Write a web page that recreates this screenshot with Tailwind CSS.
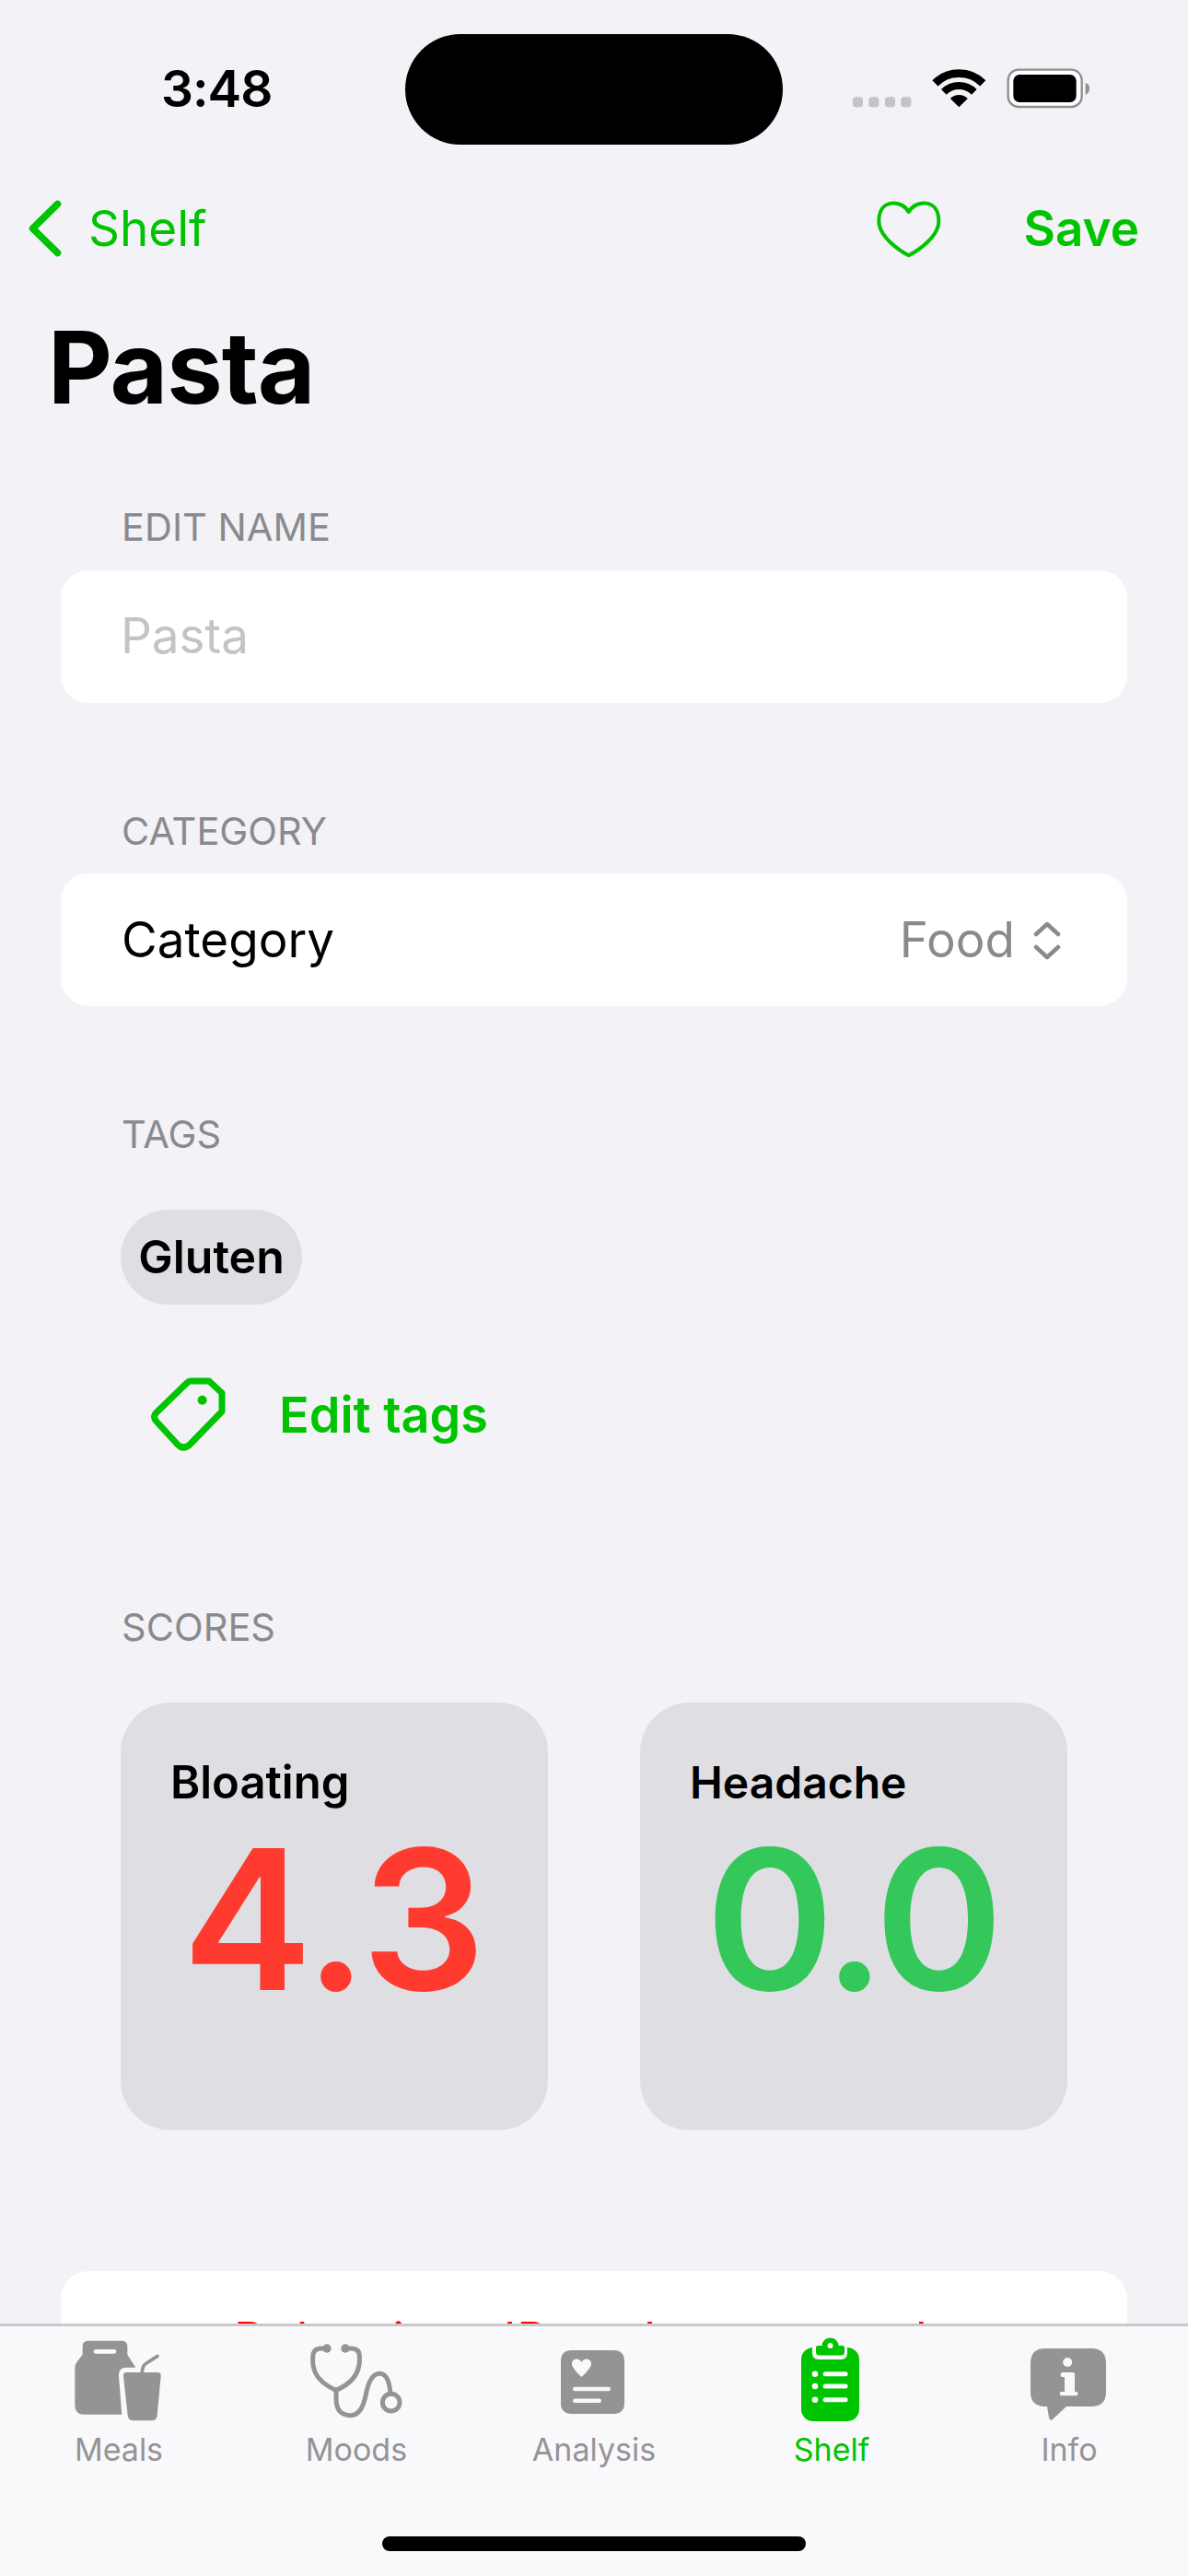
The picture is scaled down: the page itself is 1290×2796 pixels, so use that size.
<!DOCTYPE html>
<html lang="en">
  <head>
    <meta charset="UTF-8" />
    <meta name="viewport" content="width=device-width, initial-scale=1" />
    <title>Pasta</title>
    <script src="https://cdn.jsdelivr.net/npm/@tailwindcss/browser@4"></script>
  </head>

  <body class="bg-[#f2f2f7]">
    <main class="relative w-[1290px] h-[2796px] overflow-hidden bg-[#f2f2f7] text-black font-[family-name:Inter,sans-serif]">
      <!-- Status bar -->
      <div class="relative h-[192px] flex items-center justify-between pl-[175px] pr-[106px]">
        <span class="text-[55px] leading-none font-semibold tracking-[-1px]">3:48</span>
        <div class="absolute left-[440px] top-[37px] w-[410px] h-[120px] rounded-[60px] bg-black"></div>
        <svg class="mt-[11px] w-[258px] h-[60px]" viewBox="137 95 774 180" aria-hidden="true">
          <rect x="137" y="195" width="33" height="33" rx="9" fill="#c4c4c8" />
          <rect x="189" y="195" width="33" height="33" rx="9" fill="#c4c4c8" />
          <rect x="242" y="195" width="33" height="33" rx="9" fill="#c4c4c8" />
          <rect x="294" y="195" width="33" height="33" rx="9" fill="#c4c4c8" />
          <path d="M405.2 150.2A110 110 0 0 1 560.8 150.2" fill="none" stroke="#000" stroke-width="26" />
          <path d="M433.5 178.5A70 70 0 0 1 532.5 178.5" fill="none" stroke="#000" stroke-width="24" />
          <path d="M483 228L454.7 199.7A40 40 0 0 1 511.3 199.7Z" />
          <rect x="643" y="106" width="240" height="121" rx="34" fill="#fff" stroke="#8e8e93" stroke-width="7" />
          <rect x="660" y="122" width="205" height="90" rx="20" />
          <path d="M895 148Q908 152 908 167Q908 183 895 187Z" fill="#8e8e93" />
        </svg>
      </div>

      <!-- Nav row -->
      <div class="h-[112px] flex items-center justify-between pl-[31px] pr-[53px] text-[#00c400] text-[53px] leading-none">
        <div class="flex items-center gap-[29px]">
          <svg class="w-[36px] h-[62px]" viewBox="0 0 36 62" fill="none" stroke="currentColor" stroke-width="7.5" stroke-linecap="round" stroke-linejoin="round" aria-hidden="true">
            <path d="M31.5 4.500L4.500 31L31.500 57.500" />
          </svg>
          <span>Shelf</span>
        </div>
        <div class="flex items-center gap-[90px]">
          <svg class="w-[70px] h-[64px]" viewBox="218 528 210 192" fill="none" stroke="currentColor" stroke-width="12" aria-hidden="true">
            <path d="M322 570C300 530 225 525 225 600C225 650 290 695 322 712C355 695 420 650 420 600C420 525 345 530 322 570Z" stroke-linejoin="round" />
          </svg>
          <span class="font-semibold">Save</span>
        </div>
      </div>

      <h1 class="pl-[52px] pt-[34px] text-[108px] leading-[122px] font-bold tracking-[-1px]">Pasta</h1>

      <!-- Form -->
      <div class="px-[66px] pt-[88px] text-[53px]">
        <p class="pl-[66px] text-[41.5px] leading-[48px] text-[#8a8a8e]">EDIT NAME</p>
        <div class="mt-[23px] h-[144px] rounded-[30px] bg-white flex items-center pl-[65px] text-[#c4c4c7]">Pasta</div>

        <p class="mt-[115px] pl-[66px] text-[41.5px] leading-[48px] text-[#8a8a8e]">CATEGORY</p>
        <div class="mt-[22px] h-[144px] pt-[2px] rounded-[30px] bg-white flex items-center justify-between pl-[66px] pr-[72px]">
          <span>Category</span>
          <div class="flex items-center gap-[20px] text-[#8a8a8e]">
            <span>Food</span>
            <svg class="w-[30px] h-[42px]" viewBox="0 0 30 42" fill="none" stroke="currentColor" stroke-width="4.500" stroke-linecap="round" stroke-linejoin="round" aria-hidden="true">
              <path d="M3 14L15 3L27 14M3 28L15 39L27 28" />
            </svg>
          </div>
        </div>

        <p class="mt-[115px] pl-[66px] text-[41.5px] leading-[48px] text-[#8a8a8e]">TAGS</p>
        <div class="mt-[58px] ml-[65px] w-[197px] h-[103px] rounded-[52px] bg-[#dedee3] flex items-center justify-center text-[50px] font-semibold">Gluten</div>
        <div class="mt-[78px] ml-[97px] flex items-center gap-[58px] text-[#00c400] text-[54px] font-semibold">
          <svg class="w-[82px] h-[82px]" viewBox="0 0 82 82" fill="none" stroke="currentColor" stroke-width="7" stroke-linejoin="round" aria-hidden="true">
            <path d="M44 5H64L78 18V38L43 74Q36 80 30 74L7 49Q2 44 7 39L40 7Q42 5 44 5Z" />
            <circle cx="56.600" cy="25.700" r="5" fill="currentColor" stroke="none" />
          </svg>
          <span>Edit tags</span>
        </div>

        <p class="mt-[166px] pl-[66px] text-[41.5px] leading-[48px] text-[#8a8a8e]">SCORES</p>
        <div class="mt-[58px] ml-[65px] flex gap-[100px]">
          <div class="w-[464px] h-[464px] rounded-[54px] bg-[#dedee3] pt-[62px] pl-[54px]">
            <p class="text-[49px] leading-[50px] font-semibold">Bloating</p>
            <p class="mt-[17px] pl-[13px] text-[212px] leading-none font-semibold text-[#ff3b30] tracking-[-1px]">4.3</p>
          </div>
          <div class="w-[464px] h-[464px] rounded-[54px] bg-[#dedee3] pt-[62px] pl-[54px]">
            <p class="text-[48px] leading-[50px] font-semibold">Headache</p>
            <p class="mt-[17px] pl-[17px] text-[212px] leading-none font-semibold text-[#34c759] tracking-[-6px]">0.0</p>
          </div>
        </div>

        <div class="mt-[153px] h-[144px] pt-[6px] rounded-[30px] bg-white flex items-center justify-center text-[#ff0000] text-[52px]">Delete item 'Pasta' permanently</div>
      </div>

      <!-- Tab bar, sits over the scrolled content -->
      <nav class="absolute left-0 right-0 bottom-0 h-[274px] bg-[#f9f9fb] border-t-[3px] border-[#c9c9cc]">
        <div class="grid grid-cols-5 text-[34px] leading-[38px] text-[#949497] text-center">
          <div class="flex flex-col items-center pt-[14px]">
            <svg class="w-[100px] h-[90px]" viewBox="120 60 300 270" fill="currentColor" aria-hidden="true">
              <path fill-rule="evenodd" d="M170 65H280Q298 65 298 83V110L325 152H295Q268 152 270 180L280 305H157Q127 305 127 275V155Q127 142 135 132L152 110V83Q152 65 170 65ZM195 93Q188 93 188 100Q188 107 195 107H255Q262 107 262 100Q262 93 255 93Z" />
              <path d="M295 168H397Q408 168 407 180L395 308Q393 325 378 325H317Q301 325 299 308L285 180Q284 168 295 168Z" />
              <path d="M346 168Q346 146 360 138L396 115" fill="none" stroke="currentColor" stroke-width="11" stroke-linecap="round" />
            </svg>
            <span class="mt-[11px]">Meals</span>
          </div>
          <div class="flex flex-col items-center pt-[14px]">
            <svg class="ml-[4px] w-[110px] h-[90px]" viewBox="885 60 330 270" fill="none" stroke="currentColor" stroke-width="15" aria-hidden="true">
              <path d="M945 90H925Q902 92 902 120V135Q905 195 978 226Q1050 195 1054 135V115Q1054 92 1030 90H1008" />
              <path d="M978 226V258Q980 308 1025 308Q1062 308 1075 240Q1088 172 1120 172Q1150 172 1155 238" stroke-linecap="round" />
              <circle cx="948" cy="90" r="14" fill="currentColor" stroke="none" />
              <circle cx="1008" cy="90" r="14" fill="currentColor" stroke="none" />
              <circle cx="1157" cy="266" r="28" />
            </svg>
            <span class="mt-[11px]">Moods</span>
          </div>
          <div class="flex flex-col items-center pt-[14px]">
            <svg class="w-[100px] h-[90px]" viewBox="0 0 100 90" aria-hidden="true">
              <rect x="14" y="12" width="69" height="69" rx="10" fill="currentColor" />
              <path d="M36.500 41C30 35 26 30 26 26.500C26 21 34 19.500 36.500 25C39 19.500 47 21 47 26.500C47 30 43 35 36.500 41Z" fill="#f9f9fb" />
              <rect x="27" y="51.700" width="41" height="4.600" rx="2.300" fill="#f9f9fb" />
              <rect x="27" y="64.400" width="31" height="4.600" rx="2.300" fill="#f9f9fb" />
            </svg>
            <span class="mt-[11px]">Analysis</span>
          </div>
          <div class="flex flex-col items-center pt-[14px] text-[#00c400]">
            <svg class="w-[100px] h-[90px] overflow-visible" viewBox="0 0 100 90" aria-hidden="true">
              <rect x="17" y="9" width="63" height="80" rx="13" fill="currentColor" />
              <path d="M29 0V15Q29 22 36 22H60Q67 22 67 15V0Z" fill="#f9f9fb" />
              <path d="M33 9Q33 7 35 7H39.500A9 8.500 0 0 1 57.500 7H62Q64 7 64 9V14Q64 17.500 60 17.500H37Q33 17.500 33 14Z" fill="currentColor" />
              <circle cx="48.500" cy="7" r="3" fill="#f9f9fb" />
              <g fill="#f9f9fb">
                <circle cx="32" cy="37.700" r="3.300" />
                <circle cx="32" cy="51" r="3.300" />
                <circle cx="32" cy="65.700" r="3.300" />
                <rect x="40.600" y="35.200" width="27" height="5" rx="2.500" />
                <rect x="40.600" y="48.500" width="27" height="5" rx="2.500" />
                <rect x="40.600" y="63.200" width="27" height="5" rx="2.500" />
              </g>
            </svg>
            <span class="mt-[11px]">Shelf</span>
          </div>
          <div class="flex flex-col items-center pt-[14px]">
            <svg class="w-[100px] h-[90px]" viewBox="0 0 100 90" aria-hidden="true">
              <path d="M24 10H74Q90 10 90 26V57Q90 73 74 73H47L32 87Q29 89 28 85L26 73H24Q8 73 8 57V26Q8 10 24 10Z" fill="currentColor" />
              <circle cx="48.200" cy="25" r="5" fill="#f9f9fb" />
              <path d="M42.500 36H54Q56 36 56 38V57H57.500Q59.500 57 59.500 59.200Q59.500 61.300 57.500 61.300H41.700Q39.700 61.300 39.700 59.200Q39.700 57 41.700 57H45V41H42.500Q40.600 41 40.600 38.500Q40.600 36 42.500 36Z" fill="#f9f9fb" />
            </svg>
            <span class="mt-[11px]">Info</span>
          </div>
        </div>
        <div class="absolute left-[415px] bottom-[27px] w-[460px] h-[16px] rounded-[8px] bg-black"></div>
      </nav>
    </main>
  </body>
</html>
